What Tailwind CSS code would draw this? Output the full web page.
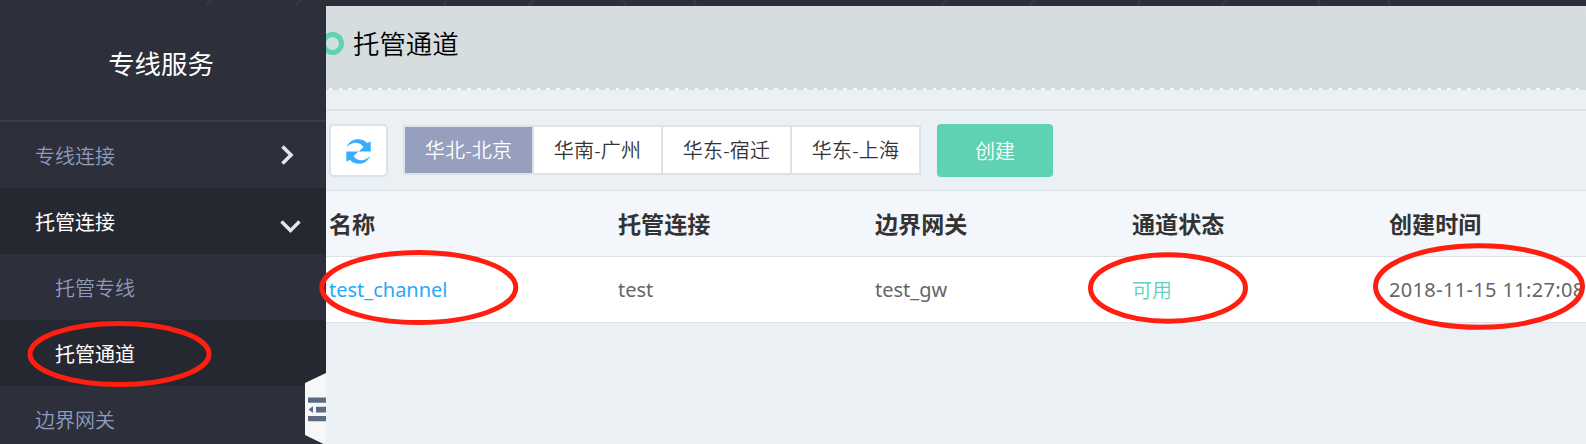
<!DOCTYPE html>
<html lang="zh-CN">
<head>
<meta charset="utf-8">
<title>托管通道</title>
<script src="https://cdn.jsdelivr.net/npm/@tailwindcss/browser@4"></script>
</head>
<body class="relative flex h-[444px] w-[1586px] flex-col overflow-hidden bg-[#2d2f3b] font-['Noto_Sans','Noto_Sans_CJK_SC',sans-serif]">
  <svg class="absolute left-0 top-0" width="1586" height="6" fill="none" stroke="#383a45" stroke-width="2">
    <path d="M206 6l6-7M295 6l6-7M444 6l2-7M528 6l7-7M623 -1l3 7M694 -1l2 7M942 6l6-7M1030 6l6-7M1138 6l2-7M1222 6l6-7M1318 -1l2 7M1388 -1l2 7"/>
  </svg>
  <div class="flex min-h-0 flex-1">
    <aside class="relative w-[326px] shrink-0 text-[20px] font-[350] text-[#8d9bbd]">
      <div class="h-[6px]"></div>
      <h1 class="flex h-[116px] items-center justify-center border-b-2 border-[#363c48] pr-[4px] pt-[4px] text-[26.4px] font-normal text-white">专线服务</h1>
      <nav>
        <a class="flex h-[66px] items-center justify-between pl-[35px] pr-[32px] pt-[3px]">专线连接
          <svg class="-mt-[4px]" width="13" height="20" viewBox="0 0 13 20" fill="none" stroke="#e6e6e8" stroke-width="3.6"><path d="M1.5 1.5L10 10L1.5 18.5"/></svg>
        </a>
        <a class="flex h-[66px] items-center justify-between bg-[#262831] pl-[35px] pr-[25px] pt-[4px] font-normal text-white">托管连接
          <svg class="mt-[6px]" width="21" height="13" viewBox="0 0 21 13" fill="none" stroke="#e6e6e8" stroke-width="3.4"><path d="M1.5 1.5L10.5 10.5L19.5 1.5"/></svg>
        </a>
        <a class="flex h-[66px] items-center pl-[55px] pt-[4px]">托管专线</a>
        <a class="flex h-[66px] items-center bg-[#262831] pl-[55px] pt-[4px] font-normal text-white">托管通道</a>
        <a class="flex h-[58px] items-center pl-[35px] pt-[12px]">边界网关</a>
      </nav>
      <svg class="absolute left-[305px] top-[372px]" width="21" height="72" viewBox="0 0 21 72">
        <path d="M0 11L21 1V72H18.500L0 63Z" fill="#f7f7f7"/>
        <path d="M3 25.500H21V30.700H3ZM11 34.800H21V40.500H11ZM3 44H21V49.300H3ZM3.500 37.600L8 34.300V41Z" fill="#5b6b84"/>
      </svg>
    </aside>
    <main class="mt-[6px] flex min-w-0 flex-1 flex-col overflow-hidden bg-[#eaf0f4]">
      <header class="flex h-[82px] shrink-0 items-center bg-linear-to-b from-[#d9dbe1] from-[0px] to-[#d5dddf] to-[8px] pb-[7px] text-[26.4px] font-[350] text-black">
        <svg class="mr-[9px]" width="18" height="23" viewBox="0 0 18 23"><circle cx="6.500" cy="11.500" r="9" fill="none" stroke="#5fd2b5" stroke-width="5"/></svg>
        <span class="pt-[2px]">托管通道</span>
      </header>
      <div class="h-[2px] shrink-0 bg-[repeating-linear-gradient(90deg,#d2dae3_0_2.6px,#f4f8fa_2.6px_6px,#d2dae3_6px_9.9px)]"></div>
      <div class="mt-[19px] flex h-[81px] shrink-0 items-start border-t-2 border-[#dbe2e8] pl-[3px] pt-[13px] text-[20px] font-[350] text-[#333]">
        <button class="flex h-[53px] w-[59px] items-center justify-center rounded-[5px] border-2 border-[#dbe3e8] bg-white pt-[2px]">
          <svg width="25" height="25" viewBox="0 0 25 25" fill="#38adff">
            <path d="M.5 8C4 1.500 8.500 .2 13 .3C17 .4 19.500 2.300 21 4L24.700 2.500V12.500H12.500L17.500 8C15 4.300 11 3 7.500 4C4.500 4.800 2.500 6.200 .5 8Z"/>
            <path d="M24.500 17C21 23.500 16.500 24.800 12 24.700C8 24.600 5.500 22.700 4 21L.3 22.500V12.500H12.500L7.500 17C10 20.700 14 22 17.500 21C20.500 20.200 22.500 18.800 24.500 17Z"/>
          </svg>
        </button>
        <div class="ml-[15px] mt-px flex h-[50px] divide-x-2 divide-[#dbe3e8] border-2 border-[#dbe3e8] bg-white tracking-[0.2px]">
          <button class="w-[129px] bg-[#969fbd] pt-[2px] text-white">华北-北京</button>
          <button class="w-[129px] pt-[2px]">华南-广州</button>
          <button class="w-[129px] pt-[2px]">华东-宿迁</button>
          <button class="w-[127px] pt-[2px]">华东-上海</button>
        </div>
        <button class="ml-[16px] h-[53px] w-[116px] rounded-[4px] bg-[#5fd2b5] pt-[2px] text-white">创建</button>
      </div>
      <div class="grid h-[67px] shrink-0 grid-cols-[289px_257px_257px_257px_194px] items-center border-y border-[#dce3e8] bg-[#f3f6fb] pl-[3px] pt-[2px] text-[23.1px] font-bold text-[#333]">
        <div>名称</div><div>托管连接</div><div>边界网关</div><div>通道状态</div><div>创建时间</div>
      </div>
      <div class="grid h-[66px] shrink-0 grid-cols-[289px_257px_257px_257px_220px] items-center whitespace-nowrap border-b border-[#dce3e8] bg-white pl-[3px] text-[20px] text-[#666]">
        <div class="text-[#2aa8fb]">test_channel</div><div>test</div><div>test_gw</div><div class="pt-[2px] font-[350] text-[#5fd2b5]">可用</div><div class="tracking-[0.35px]">2018-11-15 11:27:08</div>
      </div>
    </main>
  </div>
  <svg class="pointer-events-none absolute left-0 top-0" width="1586" height="444" fill="none" stroke="#ff1e10" stroke-width="5">
    <ellipse cx="119.500" cy="354" rx="89.500" ry="30.500"/>
    <ellipse cx="418.800" cy="287.500" rx="97" ry="35"/>
    <ellipse cx="1168" cy="288" rx="77.500" ry="33.300"/>
    <ellipse cx="1479" cy="286.500" rx="103.500" ry="40.800"/>
  </svg>
</body>
</html>
